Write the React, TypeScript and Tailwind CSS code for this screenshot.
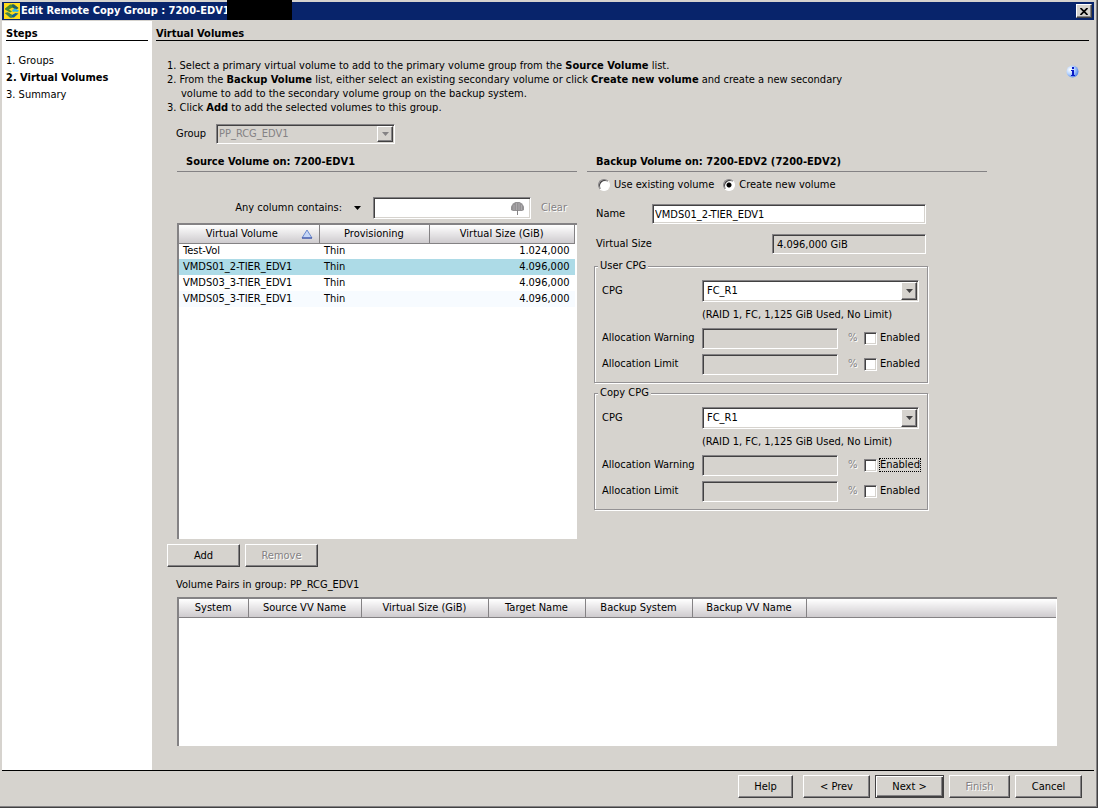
import React, { useState } from "react";
import clsx from "clsx";

const sunken =
  "border border-t-[#848284] border-l-[#848284] border-r-white border-b-white shadow-[inset_1px_1px_0_#424142,inset_-1px_-1px_0_#d6d3ce]";
const raised =
  "border border-t-white border-l-white border-r-[#424142] border-b-[#424142] shadow-[inset_-1px_-1px_0_#848284]";
const disabledText = "text-[#848284] [text-shadow:1px_1px_0_#fff]";
const headerCell =
  "h-[18px] border-r border-b border-[#848284] bg-linear-to-b from-white to-[#cecbce] p-0 text-center font-normal";

const Steps = ["Groups", "Virtual Volumes", "Summary"];

const Volumes = [
  { name: "Test-Vol", provisioning: "Thin", size: "1.024,000" },
  { name: "VMDS01_2-TIER_EDV1", provisioning: "Thin", size: "4.096,000" },
  { name: "VMDS03_3-TIER_EDV1", provisioning: "Thin", size: "4.096,000" },
  { name: "VMDS05_3-TIER_EDV1", provisioning: "Thin", size: "4.096,000" },
];

const AppIcon = () => (
  <svg width="16" height="16" viewBox="0 0 16 16" className="shrink-0">
    <rect width="16" height="16" fill="#ffdb18" />
    <path d="M1 5.500L6 1.500H10L14.500 5L12 6.500L8.500 4.500L5 6.500L8 8.500L6 9.500L1 6.500Z" fill="#4a8a31" />
    <path d="M8 1.500H10L14.500 5L12 6.500L8.500 4.500Z" fill="#215d63" />
    <path d="M8 7L11 5.500L15 7.500L13.500 9L11 8.500L9 9Z" fill="#31b6e7" />
    <path d="M1 10L4 9.500L8 12L11.500 10L14.500 10.500L10 14.500H6Z" fill="#106194" />
    <path d="M1 10L4 9.500L8 12V14.500H6Z" fill="#42864a" />
  </svg>
);

const InfoIcon = () => (
  <svg width="13" height="13" viewBox="0 0 13 13">
    <defs>
      <radialGradient id="info" cx="30%" cy="35%" r="75%">
        <stop offset="0" stopColor="#ffffff" />
        <stop offset="0.5" stopColor="#b5d3ff" />
        <stop offset="1" stopColor="#4a7de7" />
      </radialGradient>
    </defs>
    <circle cx="6.5" cy="6.5" r="6" fill="url(#info)" />
    <path d="M6 2h2v2H6zM5 5h3v5h1v1H5v-1h1V6H5z" fill="#0818c6" />
  </svg>
);

const FilterIcon = () => (
  <svg width="15" height="15" viewBox="0 0 15 15" className="shrink-0">
    <path d="M1 9V5.500L3 2.500L5.500 1H9.500L12 2.500L14 5.500V9L12 10H3Z" fill="#949294" />
    <path d="M4 4v5M6.500 2v7M9 2v7M11.500 4v5" stroke="#adaaad" fill="none" />
    <path d="M7.500 9v5" stroke="#848284" fill="none" />
  </svg>
);

const DownArrow = ({ color }: { color: string }) => (
  <svg width="7" height="4" viewBox="0 0 7 4">
    <path d="M0 0h7L3.500 4z" fill={color} />
  </svg>
);

type ComboProps = { id: string; value: string; disabled?: boolean };

const Combo = ({ id, value, disabled }: ComboProps) => (
  <div className="relative w-full">
    <select
      id={id}
      disabled={disabled}
      className={clsx(
        "block w-full appearance-none rounded-none outline-none",
        sunken,
        disabled
          ? "h-[20px] bg-[#d6d3ce] pl-[2px] text-[#848284] opacity-100"
          : "h-[22px] bg-white pl-[4px]"
      )}
    >
      <option>{value}</option>
    </select>
    <span
      className={clsx(
        "pointer-events-none absolute inset-y-[2px] right-[2px] flex w-[16px] items-center justify-center bg-[#d6d3ce]",
        raised
      )}
    >
      <DownArrow color={disabled ? "#848284" : "#424142"} />
    </span>
  </div>
);

type ButtonProps = {
  children: React.ReactNode;
  width: string;
  disabled?: boolean;
  primary?: boolean;
};

const Button = ({ children, width, disabled, primary }: ButtonProps) => (
  <button
    type="button"
    disabled={disabled}
    className={clsx(
      "h-[23px] bg-[#d6d3ce] text-center",
      width,
      primary
        ? "border border-[#424142] shadow-[inset_1px_1px_0_#fff,inset_-1px_-1px_0_#424142,inset_-2px_-2px_0_#848284]"
        : raised,
      disabled && disabledText
    )}
  >
    {children}
  </button>
);

type AllocationProps = { id: string; label: string; focused?: boolean };

const Allocation = ({ id, label, focused }: AllocationProps) => (
  <div className="flex h-[26px] items-center">
    <label htmlFor={id} className="w-[100px] shrink-0">
      {label}
    </label>
    <input
      id={id}
      disabled
      className={clsx("h-[21px] w-[136px] shrink-0 bg-[#d6d3ce] px-1", sunken)}
    />
    <span className={clsx("ml-[10px] w-[16px] shrink-0", disabledText)}>%</span>
    <label className="flex items-center gap-[2px]">
      <input
        type="checkbox"
        className={clsx("size-[13px] appearance-none bg-white checked:bg-[#424142]", sunken)}
      />
      <span
        className={clsx(
          "border border-dotted leading-[12px]",
          focused ? "border-black" : "border-transparent"
        )}
      >
        Enabled
      </span>
    </label>
  </div>
);

type CpgProps = { name: string; id: string; focused?: boolean };

const Cpg = ({ name, id, focused }: CpgProps) => (
  <fieldset className="mr-[59px] ml-[7px] h-[124px] min-w-0 border border-[#949294] pr-[8px] pl-[7px] shadow-[1px_1px_0_#fff,inset_1px_1px_0_#fff]">
    <legend className="-ml-[4px] h-[14px] bg-[#d6d3ce] px-[2px]">{name}</legend>
    <div className="mt-[7px] flex items-center">
      <label htmlFor={`${id}-cpg`} className="w-[100px] shrink-0">
        CPG
      </label>
      <Combo id={`${id}-cpg`} value="FC_R1" />
    </div>
    <p className="mt-[6px] mb-[3px] ml-[100px] whitespace-nowrap">
      (RAID 1, FC, 1,125 GiB Used, No Limit)
    </p>
    <Allocation id={`${id}-warning`} label="Allocation Warning" focused={focused} />
    <Allocation id={`${id}-limit`} label="Allocation Limit" />
  </fieldset>
);

const SourceVolume = () => {
  const [selected, setSelected] = useState(1);

  return (
    <section>
      <h2 className="border-b border-[#848284] pb-[2px] pl-[9px] font-bold">
        Source Volume on: 7200-EDV1
      </h2>
      <div className="mt-[25px] flex h-[22px] items-center justify-end">
        <label htmlFor="filter">Any column contains:</label>
        <button type="button" aria-label="Choose column" className="mx-[12px]">
          <DownArrow color="#000" />
        </button>
        <div className={clsx("flex h-[22px] w-[158px] items-center bg-white pr-[5px]", sunken)}>
          <input id="filter" className="w-full min-w-0 bg-transparent px-1 outline-none" />
          <FilterIcon />
        </div>
        <button type="button" disabled className={clsx("mr-[10px] ml-[10px]", disabledText)}>
          Clear
        </button>
      </div>
      <div className="mt-[4px] h-[316px] border-t-2 border-l-2 border-[#848284] bg-white pr-[2px]">
        <table className="w-full table-fixed border-collapse">
          <colgroup>
            <col className="w-[140px]" />
            <col className="w-[110px]" />
            <col />
          </colgroup>
          <thead>
            <tr>
              <th className={headerCell}>
                <div className="flex items-center pr-[6px]">
                  <span className="flex-1 pl-[4px]">Virtual Volume</span>
                  <svg width="12" height="10" viewBox="0 0 12 10">
                    <path d="M6 1L11 9H1Z" fill="#c6d7f7" stroke="#6b8ace" />
                    <path d="M1 9h10" stroke="#31459c" />
                  </svg>
                </div>
              </th>
              <th className={headerCell}>Provisioning</th>
              <th className={headerCell}>Virtual Size (GiB)</th>
            </tr>
          </thead>
          <tbody>
            {Volumes.map((volume, index) => (
              <tr
                key={volume.name}
                onClick={() => setSelected(index)}
                className={clsx(
                  "h-[16px]",
                  index === selected ? "bg-[#addbe7]" : index % 2 ? "bg-[#f7fbff]" : "bg-white"
                )}
              >
                <td className="p-0 pl-[4px]">{volume.name}</td>
                <td className="p-0 pl-[5px]">{volume.provisioning}</td>
                <td className="p-0 pr-[5px] text-right">{volume.size}</td>
              </tr>
            ))}
          </tbody>
        </table>
      </div>
    </section>
  );
};

const radio =
  "size-[12px] appearance-none rounded-full border border-t-[#848284] border-l-[#848284] border-r-white border-b-white bg-white shadow-[inset_1px_1px_0_#424142] checked:bg-[radial-gradient(circle,#000_2px,#fff_3px)]";

const BackupVolume = () => (
  <section>
    <h2 className="border-b border-[#848284] pb-[2px] pl-[9px] font-bold">
      Backup Volume on: 7200-EDV2 (7200-EDV2)
    </h2>
    <div className="mt-[6px] flex gap-[9px] pl-[11px]">
      <label className="flex items-center gap-[4px]">
        <input type="radio" name="target" className={radio} />
        Use existing volume
      </label>
      <label className="flex items-center gap-[4px]">
        <input type="radio" name="target" defaultChecked className={radio} />
        Create new volume
      </label>
    </div>
    <div className="mt-[12px] flex items-center pr-[61px] pl-[9px]">
      <label htmlFor="name" className="w-[56px]">
        Name
      </label>
      <input
        id="name"
        defaultValue="VMDS01_2-TIER_EDV1"
        className={clsx("h-[20px] min-w-0 flex-1 bg-white px-[2px] outline-none", sunken)}
      />
    </div>
    <div className="mt-[10px] flex items-center justify-between pr-[61px] pl-[9px]">
      <label htmlFor="size">Virtual Size</label>
      <input
        id="size"
        readOnly
        value="4.096,000 GiB"
        className={clsx("h-[20px] w-[154px] bg-[#d6d3ce] px-[4px] outline-none", sunken)}
      />
    </div>
    <div className="mt-[5px] flex flex-col gap-[3px]">
      <Cpg name="User CPG" id="user" />
      <Cpg name="Copy CPG" id="copy" focused />
    </div>
  </section>
);

const VolumePairs = () => (
  <div className="mr-[37px] ml-[25px] flex-1 border-t-2 border-l-2 border-[#848284] bg-white pr-[1px]">
    <table className="w-full table-fixed border-collapse">
      <colgroup>
        <col className="w-[69px]" />
        <col className="w-[113px]" />
        <col className="w-[127px]" />
        <col className="w-[97px]" />
        <col className="w-[107px]" />
        <col className="w-[114px]" />
        <col />
      </colgroup>
      <thead>
        <tr>
          <th className={headerCell}>System</th>
          <th className={headerCell}>Source VV Name</th>
          <th className={headerCell}>Virtual Size (GiB)</th>
          <th className={headerCell}>Target Name</th>
          <th className={headerCell}>Backup System</th>
          <th className={headerCell}>Backup VV Name</th>
          <td className="border-b border-[#848284] bg-linear-to-b from-white to-[#cecbce] p-0" />
        </tr>
      </thead>
    </table>
  </div>
);

const App = () => {
  return (
    <div className="flex min-h-screen flex-col border-r border-b border-[#424142] bg-[#d6d3ce] pt-[2px] pl-[2px] font-['DejaVu_Sans_Condensed','DejaVu_Sans',sans-serif] text-[11px] leading-[14px] text-black shadow-[inset_-1px_-1px_0_#848284]">
      <header className="mr-[3px] flex h-[18px] items-center bg-[#08246b] pr-[2px] pl-[2px] text-white">
        <AppIcon />
        <h1 className="ml-[1px] w-[206px] font-bold whitespace-nowrap">
          Edit Remote Copy Group : 7200-EDV1
        </h1>
        <span className="-mt-[2px] h-[20px] w-[65px] bg-black" />
        <button
          type="button"
          aria-label="Close"
          className={clsx("ml-auto flex h-[14px] w-[16px] items-center justify-center bg-[#d6d3ce]", raised)}
        >
          <svg width="8" height="7" viewBox="0 0 8 7">
            <path d="M0.500 0L7.500 7M7.500 0L0.500 7" stroke="#000" strokeWidth="1.700" />
          </svg>
        </button>
      </header>

      <div className="mr-[3px] flex flex-1 border-b border-black pt-[1px]">
        <aside className="w-[150px] shrink-0 bg-white pt-[6px] pr-[4px] pl-[4px]">
          <h2 className="border-b border-black leading-[13px] font-bold">Steps</h2>
          <ol className="mt-[11px] leading-[17px]">
            {Steps.map((step, index) => (
              <li key={step} className={clsx(index === 1 && "font-bold")}>
                {index + 1}. {step}
              </li>
            ))}
          </ol>
        </aside>

        <main className="flex min-w-0 flex-1 flex-col pt-[6px] pb-[24px]">
          <h2 className="mr-[5px] ml-[4px] border-b border-black leading-[13px] font-bold">
            Virtual Volumes
          </h2>
          <div className="mt-[18px] flex justify-between pr-[15px] pl-[15px]">
            <ol>
              <li>
                1. Select a primary virtual volume to add to the primary volume group from the{" "}
                <b>Source Volume</b> list.
              </li>
              <li>
                2. From the <b>Backup Volume</b> list, either select an existing secondary volume or
                click <b>Create new volume</b> and create a new secondary
                <p className="pl-[14px]">
                  volume to add to the secondary volume group on the backup system.
                </p>
              </li>
              <li>
                3. Click <b>Add</b> to add the selected volumes to this group.
              </li>
            </ol>
            <button type="button" aria-label="Information" className="mt-[6px] self-start">
              <InfoIcon />
            </button>
          </div>
          <div className="mt-[9px] flex items-center pl-[24px]">
            <label htmlFor="group" className="w-[40px]">
              Group
            </label>
            <div className="w-[179px]">
              <Combo id="group" value="PP_RCG_EDV1" disabled />
            </div>
          </div>

          <div className="mt-[11px] ml-[25px] grid max-w-[810px] grid-cols-2 gap-[10px]">
            <SourceVolume />
            <BackupVolume />
          </div>

          <div className="mt-[5px] flex gap-[5px] pl-[15px]">
            <Button width="w-[73px]">Add</Button>
            <Button width="w-[73px]" disabled>
              Remove
            </Button>
          </div>
          <p className="mt-[11px] mb-[5px] pl-[24px]">Volume Pairs in group: PP_RCG_EDV1</p>
          <VolumePairs />
        </main>
      </div>

      <footer className="flex justify-end pt-[4px] pr-[15px] pb-[9px]">
        <Button width="w-[55px]">Help</Button>
        <div className="ml-[10px] flex gap-[5px]">
          <Button width="w-[67px]">&lt; Prev</Button>
          <Button width="w-[69px]" primary>
            Next &gt;
          </Button>
          <Button width="w-[61px]" disabled>
            Finish
          </Button>
          <Button width="w-[67px]">Cancel</Button>
        </div>
      </footer>
    </div>
  );
};

export default App;
